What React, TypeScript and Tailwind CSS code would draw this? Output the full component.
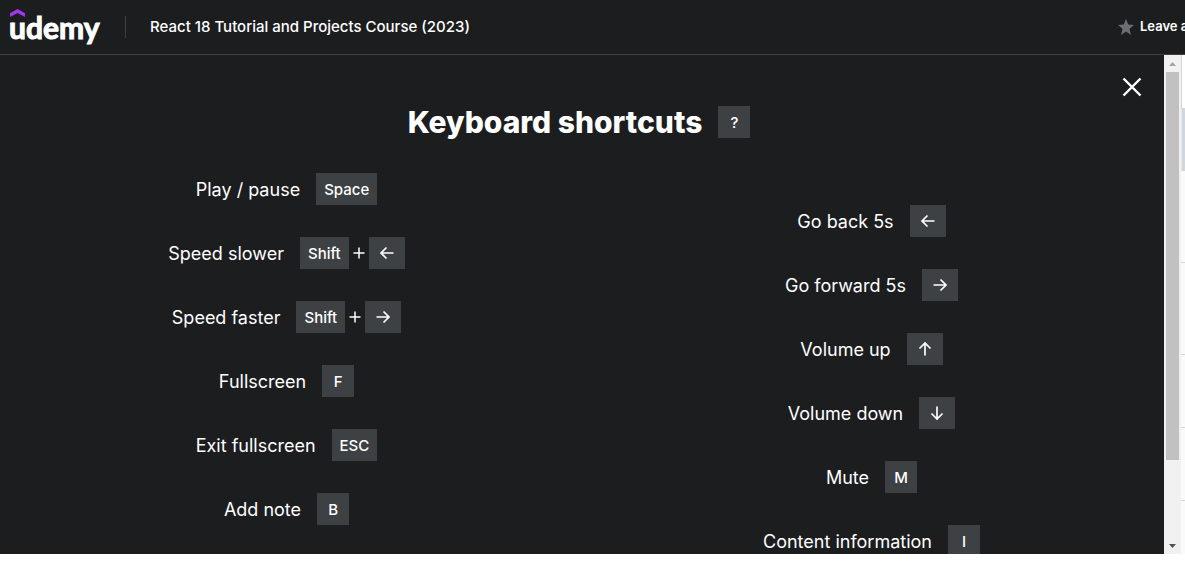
import type { ReactNode } from "react";

type Direction = "left" | "right" | "up" | "down";

const arrowPaths: Record<Direction, string> = {
  left: "M16.5 10H4M9.5 4.5L4 10l5.5 5.5",
  right: "M3.5 10H16M10.5 4.5L16 10l-5.5 5.5",
  up: "M10 16.5V4M4.5 9.5L10 4l5.5 5.5",
  down: "M10 3.5V16M4.5 10.5L10 16l5.5-5.5",
};

function Arrow({ direction }: { direction: Direction }) {
  return (
    <svg className="size-5" viewBox="0 0 20 20" fill="none" stroke="currentColor" strokeWidth="1.7" role="img" aria-label={direction}>
      <path d={arrowPaths[direction]} />
    </svg>
  );
}

function Key({ children }: { children: ReactNode }) {
  return (
    <kbd className="flex h-8 min-w-8 items-center justify-center bg-[#3e4143] px-2 pt-0.5 font-[Inter,sans-serif] text-[15px] leading-8 font-medium has-[svg]:pt-0">
      {children}
    </kbd>
  );
}

function Shortcut({ label, shift, children }: { label: string; shift?: boolean; children: ReactNode }) {
  return (
    <li className="flex h-8 items-center gap-4">
      <span className="pt-0.5">{label}</span>
      <span className="flex items-center gap-1">
        {shift && (
          <>
            <Key>Shift</Key>
            <svg className="size-3" viewBox="0 0 12 12" stroke="currentColor" strokeWidth="1.5" aria-hidden="true">
              <path d="M6 0.5v11M0.5 6h11" />
            </svg>
          </>
        )}
        <Key>{children}</Key>
      </span>
    </li>
  );
}

function Logo() {
  return (
    <a href="#home" aria-label="Udemy" className="relative block w-[92px] font-[Lato,sans-serif] text-[30px] leading-[54px] font-bold [-webkit-text-stroke:1px_white]">
      <svg className="absolute top-[9px] left-px h-2 w-[15px]" viewBox="0 0 15 8" aria-hidden="true">
        <path d="M7.5 0L15 4.2V8L7.5 3.9L0 8V4.2Z" fill="#a435f0" />
      </svg>
      udemy
    </a>
  );
}

function Scrollbar() {
  return (
    <div className="flex w-[17px] shrink-0 flex-col bg-[#f1f1f1]">
      <button aria-label="Scroll up" className="flex h-[17px] items-center justify-center">
        <svg className="h-1 w-[7px]" viewBox="0 0 7 4" aria-hidden="true">
          <path d="M0 4L3.5 0L7 4Z" fill="#a3a3a3" />
        </svg>
      </button>
      <div className="flex grow flex-col px-0.5">
        <div className="basis-5/6 bg-[#c1c1c1]" />
      </div>
      <button aria-label="Scroll down" className="flex h-[17px] items-center justify-center">
        <svg className="h-1 w-[7px]" viewBox="0 0 7 4" aria-hidden="true">
          <path d="M0 0L3.5 4L7 0Z" fill="#505050" />
        </svg>
      </button>
    </div>
  );
}

export default function App() {
  return (
    <div className="flex h-screen flex-col overflow-hidden bg-white pb-[11px] font-[Inter,sans-serif] text-white">
      <header className="flex h-[55px] shrink-0 items-center border-b border-[#3e4143] bg-[#1c1d1f] pl-[9px]">
        <Logo />
        <div className="mx-6 h-[22px] w-px bg-[#3e4143]" />
        <a href="#course" className="text-[15px] font-medium whitespace-nowrap">
          React 18 Tutorial and Projects Course (2023)
        </a>
        <button className="ml-auto flex w-[67px] shrink-0 items-center gap-1.5 overflow-hidden text-[13px] font-semibold whitespace-nowrap">
          <svg className="size-4 shrink-0" viewBox="0 0 16 16" aria-hidden="true">
            <path d="M8 0l2.2 5.5 5.8.4-4.5 3.8L12.9 16 8 12.6 3.1 16l1.4-6.3L0 5.9l5.8-.4z" fill="#6a6f73" />
          </svg>
          Leave a rating
        </button>
      </header>

      <div className="flex min-h-0 grow">
        <main className="relative min-w-0 grow overflow-hidden bg-[#1c1d1f] pt-[51px] pr-1.5">
          <button aria-label="Close" className="absolute top-[22px] right-[22px]">
            <svg className="size-5" viewBox="0 0 20 20" stroke="currentColor" strokeWidth="2.4" aria-hidden="true">
              <path d="M1.5 1.5l17 17M18.5 1.5l-17 17" />
            </svg>
          </button>
          <div className="flex items-center justify-center gap-4">
            <h1 className="text-[30px] leading-8 font-extrabold">Keyboard shortcuts</h1>
            <Key>?</Key>
          </div>
          <div className="mt-[35px] grid grid-cols-2 gap-3 text-lg leading-8">
            <ul className="flex flex-col items-center gap-8">
              <Shortcut label="Play / pause">Space</Shortcut>
              <Shortcut label="Speed slower" shift><Arrow direction="left" /></Shortcut>
              <Shortcut label="Speed faster" shift><Arrow direction="right" /></Shortcut>
              <Shortcut label="Fullscreen">F</Shortcut>
              <Shortcut label="Exit fullscreen">ESC</Shortcut>
              <Shortcut label="Add note">B</Shortcut>
            </ul>
            <ul className="flex flex-col items-center gap-8 pt-8">
              <Shortcut label="Go back 5s"><Arrow direction="left" /></Shortcut>
              <Shortcut label="Go forward 5s"><Arrow direction="right" /></Shortcut>
              <Shortcut label="Volume up"><Arrow direction="up" /></Shortcut>
              <Shortcut label="Volume down"><Arrow direction="down" /></Shortcut>
              <Shortcut label="Mute">M</Shortcut>
              <Shortcut label="Content information">I</Shortcut>
            </ul>
          </div>
        </main>
        <Scrollbar />
        <aside className="flex w-1 shrink-0 flex-col bg-[#fafafa]">
          <div className="h-[54px] border-b border-l border-[#d1d7dc] bg-white" />
          <div className="h-[62px] border-l border-[#e4e8eb] bg-[#d1d7dc]" />
          <div className="h-[92px] border-b border-[#d1d7dc]" />
          <div className="h-[92px] border-b border-[#d1d7dc]" />
          <div className="h-[73px] border-b border-[#d1d7dc]" />
          <div className="h-[73px] border-b border-[#d1d7dc]" />
        </aside>
      </div>
    </div>
  );
}
